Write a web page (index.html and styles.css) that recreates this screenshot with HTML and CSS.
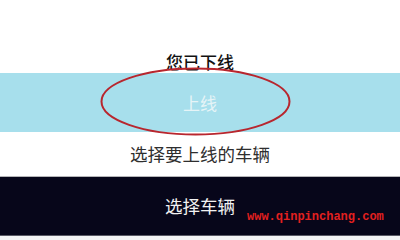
FILE: index.html
```html
<!DOCTYPE html>
<html lang="zh">
<head>
<meta charset="utf-8">
<link rel="stylesheet" href="styles.css">
</head>
<body>
<div class="page">
  <div class="top"><span class="status">您已下线</span></div>
  <div class="online-band"><span class="online">上线</span></div>
  <div class="hint"><span>选择要上线的车辆</span></div>
  <div class="select-bar">
    <span class="select">选择车辆</span>
    <span class="watermark">www.qinpinchang.com</span>
  </div>
  <div class="bottom"></div>
  <svg class="circle" width="400" height="240" viewBox="0 0 400 240">
    <ellipse cx="195.5" cy="101.5" rx="94" ry="33" fill="none" stroke="#b8262e" stroke-width="2"/>
  </svg>
</div>
</body>
</html>
```

FILE: styles.css
```css
html, body {
  margin: 0;
  padding: 0;
  background: #ffffff;
}
.page {
  position: relative;
  width: 400px;
  height: 240px;
  overflow: hidden;
  display: flex;
  flex-direction: column;
  font-family: "Noto Sans CJK SC", "Noto Sans", sans-serif;
}
.top {
  height: 73px;
  display: flex;
  justify-content: center;
  align-items: flex-end;
  box-sizing: border-box;
  padding-bottom: 0;
}
.status {
  font-size: 17px;
  line-height: 22px;
  color: #111111;
  font-weight: 500;
}
.online-band {
  height: 59px;
  background: #a7dfec;
  display: flex;
  justify-content: center;
  align-items: center;
}
.online {
  font-size: 17px;
  line-height: 20px;
  color: #e6f4f7;
  margin-top: 0;
}
.hint {
  height: 45px;
  display: flex;
  justify-content: center;
  align-items: center;
  border-bottom: 1px solid #b5b5b8;
  box-sizing: border-box;
}
.hint span {
  font-size: 17.5px;
  color: #2e2e2e;
  line-height: 22px;
}
.select-bar {
  position: relative;
  height: 58px;
  background: #07061a;
  display: flex;
  justify-content: center;
  align-items: center;
}
.select {
  font-size: 17.5px;
  line-height: 22px;
  color: #f2f2f2;
}
.watermark {
  position: absolute;
  left: 247px;
  top: 33px;
  font-family: "Liberation Mono", monospace;
  font-size: 12px;
  line-height: 14px;
  color: #e3201f;
  font-weight: bold;
}
.bottom {
  flex: 1;
  background: #f4f4f6;
  border-top: 1px solid #5a5a66;
}
.circle {
  position: absolute;
  left: 0;
  top: 0;
}
```
